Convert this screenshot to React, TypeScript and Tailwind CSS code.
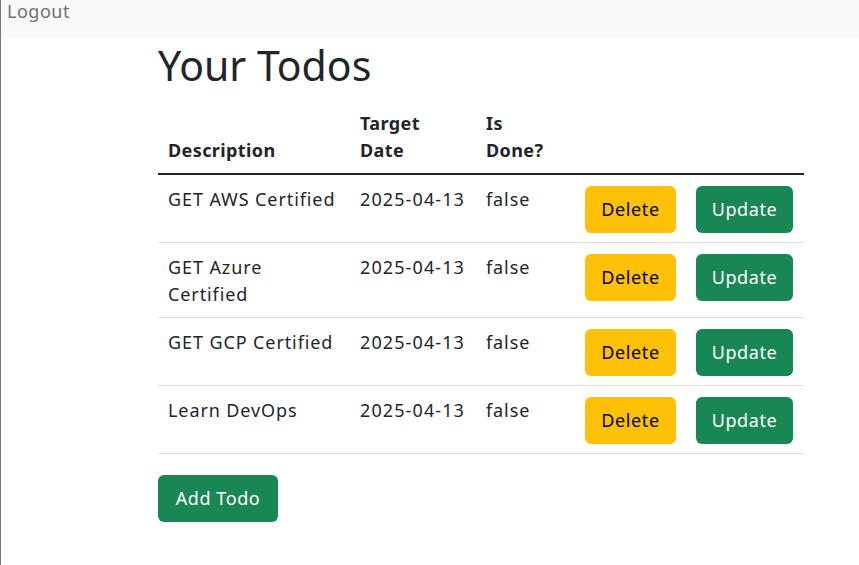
const todos = [
  { id: 1, description: 'GET AWS Certified', targetDate: '2025-04-13', done: false },
  { id: 2, description: 'GET Azure Certified', targetDate: '2025-04-13', done: false },
  { id: 3, description: 'GET GCP Certified', targetDate: '2025-04-13', done: false },
  { id: 4, description: 'Learn DevOps', targetDate: '2025-04-13', done: false },
]

export default function App() {
  return (
    <div className="min-h-[565px] border-l border-[#777777] bg-white text-[#212529] font-['Noto_Sans',sans-serif]">
      <nav className="h-[38px] bg-[#f8f9fa] px-[6px]">
        <span className="text-[18px] leading-[22px] tracking-[0.5px] text-[#6f7173]">Logout</span>
      </nav>

      <div className="ml-[157px] w-[646px]">
        <h1 className="text-[41px] leading-[54px] font-normal mb-[9px]">Your Todos</h1>

        <table className="w-full border-collapse text-[18px] leading-[27px] tracking-[0.9px]">
          <thead>
            <tr className="border-b-2 border-[#212529] tracking-[0.4px]">
              <th className="w-[193px] px-[10px] py-[9px] text-left align-bottom font-bold">Description</th>
              <th className="w-[126px] px-[9px] py-[9px] text-left align-bottom font-bold">
                Target
                <br />
                Date
              </th>
              <th className="w-[99px] px-[9px] py-[9px] text-left align-bottom font-bold">
                Is
                <br />
                Done?
              </th>
              <th className="px-[9px] py-[9px]"></th>
              <th className="px-[9px] py-[9px]"></th>
            </tr>
          </thead>
          <tbody>
            {todos.map(todo => (
              <tr key={todo.id} className="border-b border-[#dee2e6]">
                <td className="px-[10px] pt-[11px] pb-[9px] align-top">
                  {todo.description === 'GET Azure Certified' ? (
                    <>
                      GET Azure
                      <br />
                      Certified
                    </>
                  ) : (
                    todo.description
                  )}
                </td>
                <td className="px-[9px] pt-[11px] pb-[9px] align-top tracking-[1.1px]">{todo.targetDate}</td>
                <td className="px-[9px] pt-[11px] pb-[9px] align-top">{todo.done.toString()}</td>
                <td className="w-[109px] pl-[9px] pr-[9px] pt-[11px] pb-[9px] align-top">
                  <button className="flex h-[47px] w-[91px] items-center justify-center rounded-[6px] bg-[#ffc107] text-[18px] tracking-[0.6px] text-black">
                    Delete
                  </button>
                </td>
                <td className="pl-[11px] pr-[11px] pt-[11px] pb-[9px] align-top">
                  <button className="flex h-[47px] w-[97px] items-center justify-center rounded-[6px] bg-[#198754] text-[18px] tracking-[0.6px] text-white">
                    Update
                  </button>
                </td>
              </tr>
            ))}
          </tbody>
        </table>

        <button className="mt-[21px] flex h-[47px] w-[120px] items-center justify-center rounded-[6px] bg-[#198754] text-[18px] tracking-[0.6px] text-white">
          Add Todo
        </button>
      </div>
    </div>
  )
}
